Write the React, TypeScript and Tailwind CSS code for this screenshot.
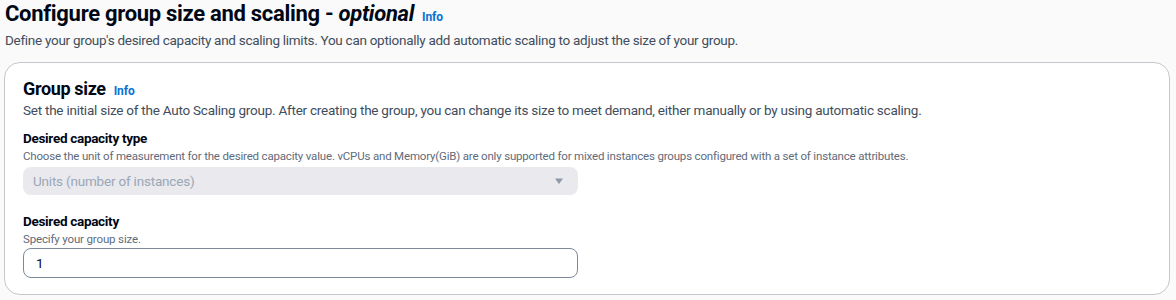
const font = { fontFamily: 'Roboto, "Liberation Sans", sans-serif' };

const InfoLink = ({ className = '' }: { className?: string }) => (
  <a href="#" className={`text-[12px] font-bold text-[#0972d3] tracking-[-0.1px] ${className}`}>Info</a>
);

export default function App() {
  return (
    <div style={font} className="min-h-[300px] bg-[#fafafa] pl-[4px] pr-[6px] text-[#000716]">
      <div className="flex items-baseline pl-[1px]">
        <h1 className="text-[22px] leading-[28px] font-bold tracking-[-0.3px]">
          Configure group size and scaling - <i className="font-bold">optional</i>
        </h1>
        <InfoLink className="ml-[8px]" />
      </div>
      <p className="mt-[2px] pl-[1px] text-[13.5px] leading-[20px] tracking-[-0.28px] text-[#414d5c]">
        Define your group's desired capacity and scaling limits. You can optionally add automatic scaling to adjust the size of your group.
      </p>

      <div className="mt-[12px] rounded-[16px] border border-[#c6c6cd] bg-white px-[18px] pt-[15px] pb-[16px]">
        <div className="flex h-[22px] items-baseline">
          <h2 className="text-[18px] leading-[22px] font-bold tracking-[-0.35px]">Group size</h2>
          <InfoLink className="ml-[8px]" />
        </div>
        <p className="text-[13.5px] leading-[20px] tracking-[-0.24px] text-[#414d5c]">
          Set the initial size of the Auto Scaling group. After creating the group, you can change its size to meet demand, either manually or by using automatic scaling.
        </p>

        <div className="mt-[8px] w-[555px]">
          <div className="text-[13.5px] leading-[20px] font-bold tracking-[-0.3px]">Desired capacity type</div>
          <div className="whitespace-nowrap text-[11.5px] leading-[16px] tracking-[-0.18px] text-[#5f6b7a]">
            Choose the unit of measurement for the desired capacity value. vCPUs and Memory(GiB) are only supported for mixed instances groups configured with a set of instance attributes.
          </div>
          <div className="mt-[3px] flex h-[28px] items-center justify-between rounded-[8px] bg-[#e9e9ee] pl-[10px] pr-[14px] text-[13.5px] tracking-[-0.2px] text-[#9ba7b6]">
            <span>Units (number of instances)</span>
            <svg width="10" height="8" viewBox="0 0 10 8">
              <path d="M1 1.5h8L5 7z" fill="#8d99a8" />
            </svg>
          </div>

          <div className="mt-[16px] text-[13.5px] leading-[20px] font-bold tracking-[-0.3px]">Desired capacity</div>
          <div className="text-[11.5px] leading-[16px] tracking-[-0.15px] text-[#5f6b7a]">Specify your group size.</div>
          <input
            defaultValue="1"
            style={font}
            className="mt-[1px] h-[30px] w-full rounded-[8px] border border-[#7d8998] px-[12px] text-[13.5px] text-[#000716] outline-none"
          />
        </div>
      </div>
    </div>
  );
}
